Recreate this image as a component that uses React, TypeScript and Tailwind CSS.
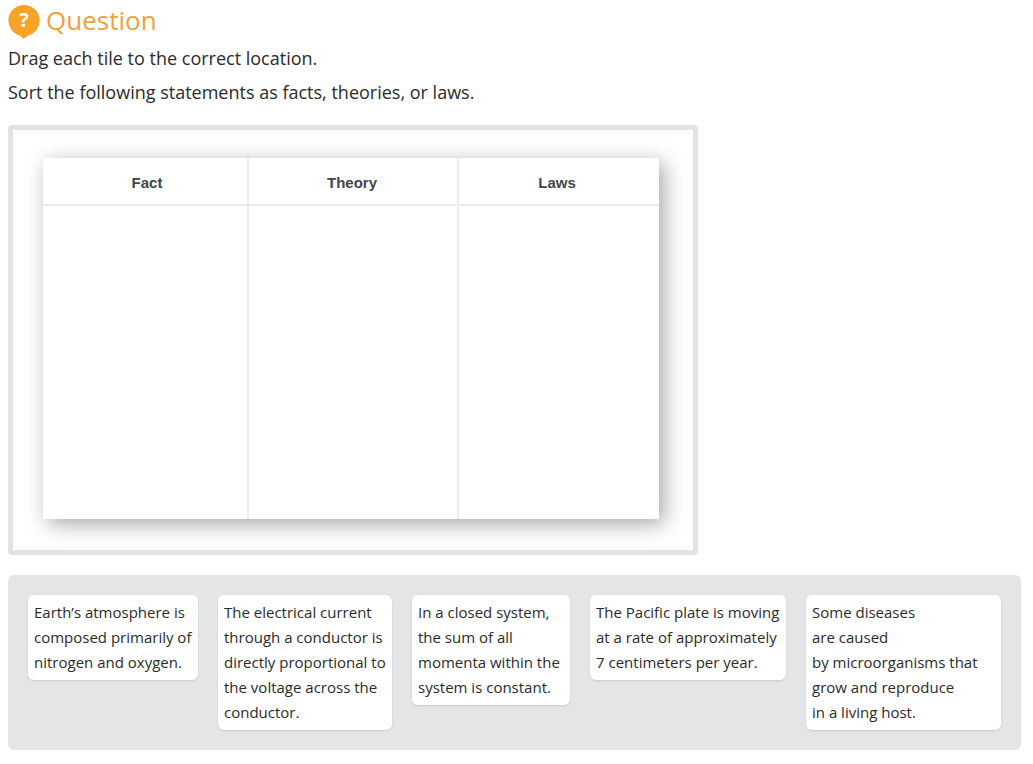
const tiles = [
  { width: 'w-[170px]', lines: ['Earth’s atmosphere is', 'composed primarily of', 'nitrogen and oxygen.'] },
  {
    width: 'w-[174px]',
    lines: ['The electrical current', 'through a conductor is', 'directly proportional to', 'the voltage across the', 'conductor.'],
  },
  { width: 'w-[158px]', lines: ['In a closed system,', 'the sum of all', 'momenta within the', 'system is constant.'] },
  { width: 'w-[196px]', lines: ['The Pacific plate is moving', 'at a rate of approximately', '7 centimeters per year.'] },
  {
    width: 'w-[195px]',
    lines: ['Some diseases', 'are caused', 'by microorganisms that', 'grow and reproduce', 'in a living host.'],
  },
];

function QuestionIcon() {
  return (
    <svg width="32" height="34" viewBox="0 0 32 34" className="shrink-0">
      <path d="M16 0a15.5 15.5 0 0 1 4 30.5L15.5 34l-3.5-3.5A15.5 15.5 0 0 1 16 0z" fill="#f5a329" />
      <text
        x="16"
        y="22"
        textAnchor="middle"
        fill="#fff"
        fontSize="20"
        fontWeight="700"
        fontFamily="'Open Sans', sans-serif"
      >
        ?
      </text>
    </svg>
  );
}

export default function App() {
  return (
    <div className="min-h-[764px] bg-white pl-2 pr-3 pt-[5px] font-['Open_Sans',sans-serif] text-[#2b2b2b]">
      {/* Header */}
      <div className="flex h-[34px] items-center gap-1.5">
        <QuestionIcon />
        <h1 className="pb-1 text-[26px] leading-8 text-[#eda33b]">Question</h1>
      </div>

      <p className="mt-[3px] text-lg leading-8">Drag each tile to the correct location.</p>
      <p className="mt-0.5 text-lg leading-8">Sort the following statements as facts, theories, or laws.</p>

      {/* Drop area */}
      <div className="mt-[17px] w-[690px] rounded border-[5px] border-[#e3e3e3] pl-[30px] pt-[28px] pb-[31px]">
        <div className="w-[616px] bg-white shadow-[5px_5px_20px_rgba(0,0,0,0.35)]">
          <div className="grid h-[361px] grid-cols-[206px_210px_200px] grid-rows-[48px_1fr] font-['Liberation_Sans',sans-serif]">
            <div className="flex items-center justify-center border-r-2 border-b-2 border-[#ebebeb] pl-1 pt-1 text-[15px] font-bold text-[#3f464d]">
              Fact
            </div>
            <div className="flex items-center justify-center border-r-2 border-b-2 border-[#ebebeb] pr-0.5 pt-1 text-[15px] font-bold text-[#3f464d]">
              Theory
            </div>
            <div className="flex items-center justify-center border-b-2 border-[#ebebeb] pr-1 pt-1 text-[15px] font-bold text-[#3f464d]">
              Laws
            </div>
            <div className="border-r-2 border-[#ebebeb]" />
            <div className="border-r-2 border-[#ebebeb]" />
            <div />
          </div>
        </div>
      </div>

      {/* Tile tray */}
      <div className="mt-5 flex h-[175px] items-start gap-5 rounded-md bg-[#e4e5e7] p-5">
        {tiles.map((tile) => (
          <div
            key={tile.lines[0]}
            className={`${tile.width} rounded-md bg-white px-1.5 py-[5px] text-[15px] leading-[25px] whitespace-nowrap text-[#2b2b2b] shadow-[0_1px_2px_rgba(0,0,0,0.12)]`}
          >
            {tile.lines.map((line) => (
              <div key={line}>{line}</div>
            ))}
          </div>
        ))}
      </div>
    </div>
  );
}
